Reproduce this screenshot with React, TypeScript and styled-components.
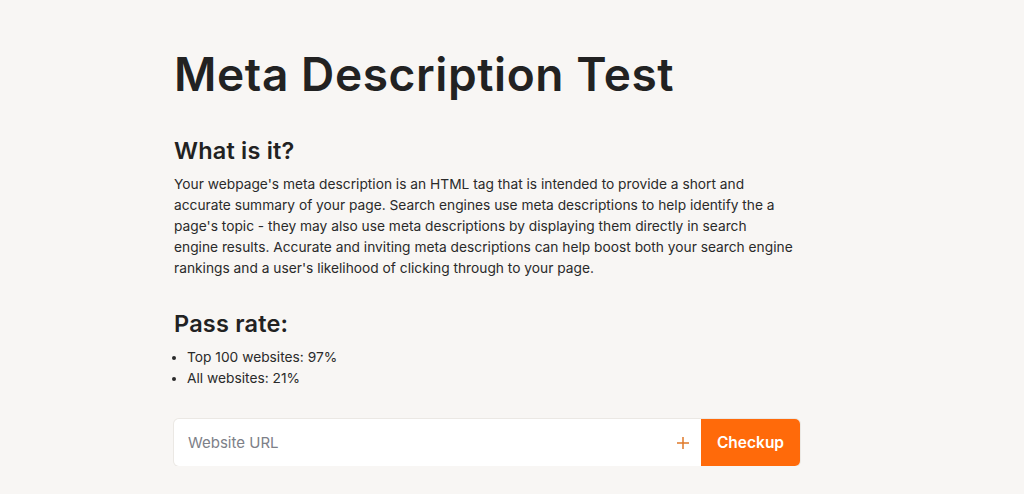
import React from 'react';
import styled, { createGlobalStyle } from 'styled-components';

const GlobalStyle = createGlobalStyle`
  body {
    margin: 0;
    background: #f8f6f4;
    font-family: Inter, "Noto Sans", sans-serif;
    color: #222222;
  }
`;

const Page = styled.main`
  padding: 44px 0 0 174px;
`;

const Content = styled.div`
  width: 626px;
`;

const Title = styled.h1`
  margin: 0 0 32px;
  font-size: 46px;
  line-height: 60px;
  font-weight: 600;
  letter-spacing: 0.6px;
  color: #222222;
`;

const Heading = styled.h2`
  margin: 0 0 8px;
  font-size: 23.5px;
  line-height: 30px;
  font-weight: 600;
  letter-spacing: 0.2px;
  color: #222222;
`;

const Paragraph = styled.p`
  margin: 0 0 30px;
  font-size: 13.75px;
  line-height: 21px;
  white-space: nowrap;
  color: #2a2a2a;
`;

const List = styled.ul`
  margin: 0 0 30px;
  padding: 0 0 0 13px;
  font-size: 13.75px;
  line-height: 21px;
  color: #2a2a2a;
`;

const Item = styled.li`
  padding-left: 0;
`;

const Form = styled.form`
  display: flex;
  height: 47px;
  border-radius: 5px;
  box-shadow: 0 0 0 1px #ebe8e4;
  background: #ffffff;
`;

const UrlInput = styled.input`
  flex: 1;
  border: none;
  outline: none;
  background: transparent;
  padding: 0 14px;
  font-family: Inter, "Noto Sans", sans-serif;
  font-size: 15px;
  color: #222222;
  border-radius: 5px 0 0 5px;

  &::placeholder {
    color: #7d8088;
  }
`;

const PlusButton = styled.button`
  display: flex;
  align-items: center;
  justify-content: center;
  width: 36px;
  border: none;
  background: transparent;
  color: #e07a2a;
  padding: 0;
`;

const Checkup = styled.button`
  width: 99px;
  border: none;
  border-radius: 0 5px 5px 0;
  background: #ff6a0a;
  color: #ffffff;
  font-family: Inter, "Noto Sans", sans-serif;
  font-size: 15.5px;
  font-weight: 600;
`;

export default function App() {
  return (
    <>
      <GlobalStyle />
      <Page>
        <Content>
          <Title>Meta Description Test</Title>
          <Heading>What is it?</Heading>
          <Paragraph>
            Your webpage's meta description is an HTML tag that is intended to provide a short and
            <br />
            accurate summary of your page. Search engines use meta descriptions to help identify the a
            <br />
            page's topic - they may also use meta descriptions by displaying them directly in search
            <br />
            engine results. Accurate and inviting meta descriptions can help boost both your search engine
            <br />
            rankings and a user's likelihood of clicking through to your page.
          </Paragraph>
          <Heading>Pass rate:</Heading>
          <List>
            <Item>Top 100 websites: 97%</Item>
            <Item>All websites: 21%</Item>
          </List>
          <Form onSubmit={(e) => e.preventDefault()}>
            <UrlInput placeholder="Website URL" />
            <PlusButton type="button" aria-label="Add">
              <svg width="14" height="14" viewBox="0 0 14 14" fill="none" stroke="currentColor" strokeWidth="1.5">
                <path d="M7 1v12M1 7h12" />
              </svg>
            </PlusButton>
            <Checkup type="submit">Checkup</Checkup>
          </Form>
        </Content>
      </Page>
    </>
  );
}
